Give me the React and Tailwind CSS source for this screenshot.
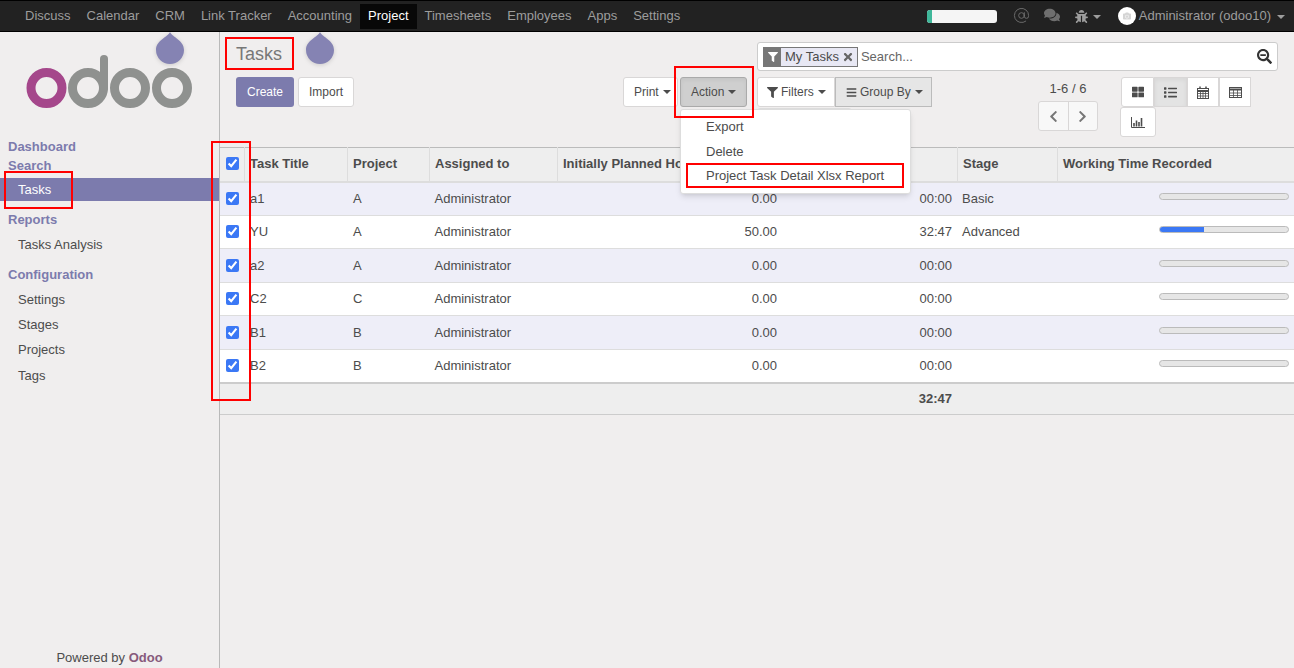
import { FaComments, FaBug, FaFilter, FaBars, FaThLarge, FaList, FaChevronLeft, FaChevronRight, FaSearchMinus, FaTimes, FaCamera } from 'react-icons/fa';
import { AtSign } from 'lucide-react';

const navItems = ['Discuss', 'Calendar', 'CRM', 'Link Tracker', 'Accounting', 'Project', 'Timesheets', 'Employees', 'Apps', 'Settings'];

const rows = [
  { title: 'a1', project: 'A', planned: '0.00', spent: '00:00', stage: 'Basic', progress: 0 },
  { title: 'YU', project: 'A', planned: '50.00', spent: '32:47', stage: 'Advanced', progress: 34 },
  { title: 'a2', project: 'A', planned: '0.00', spent: '00:00', stage: '', progress: 0 },
  { title: 'C2', project: 'C', planned: '0.00', spent: '00:00', stage: '', progress: 0 },
  { title: 'B1', project: 'B', planned: '0.00', spent: '00:00', stage: '', progress: 0 },
  { title: 'B2', project: 'B', planned: '0.00', spent: '00:00', stage: '', progress: 0 },
];

function Caret() {
  return <span className="ml-[4px] inline-block h-0 w-0 border-x-[4px] border-t-[4px] border-x-transparent border-t-current align-middle" />;
}

function Drop({ className }) {
  return (
    <svg className={`drop-shadow-sm ${className}`} width="30" height="36" viewBox="0 0 30 36">
      <path d="M15 1 C17 6 29 9 29 19 A14 14 0 0 1 1 19 C1 9 13 6 15 1 Z" fill="#8583b3" />
    </svg>
  );
}

function Logo() {
  return (
    <svg width="219" height="106" viewBox="0 32 219 106">
      <circle cx="46.5" cy="88" r="15.5" fill="none" stroke="#a5478b" strokeWidth="9" />
      <g fill="none" stroke="#8f918f" strokeWidth="9">
        <circle cx="88" cy="88" r="15.5" />
        <path d="M104 88 V59" strokeLinecap="round" strokeWidth="8" />
        <circle cx="130" cy="88" r="15.5" />
        <circle cx="172" cy="88" r="15.5" />
      </g>
    </svg>
  );
}

function CalendarIcon() {
  return (
    <svg width="12" height="13" viewBox="0 0 12 13" fill="none" stroke="#4c4c4c" strokeWidth="1">
      <rect x="0.5" y="2.5" width="11" height="10" />
      <path d="M0.5 5H11.5" strokeWidth="2" />
      <path d="M0.5 7.5H11.5M0.5 10H11.5M3.5 5V12.5M6 5V12.5M8.5 5V12.5" strokeWidth="0.8" />
      <path d="M3 0.5V3M9 0.5V3" strokeWidth="1.5" />
    </svg>
  );
}

function TableIcon() {
  return (
    <svg width="13" height="11" viewBox="0 0 13 11" fill="none" stroke="#4c4c4c" strokeWidth="1">
      <rect x="0.5" y="0.5" width="12" height="10" />
      <path d="M0.5 2.5H12.5" strokeWidth="2" />
      <path d="M0.5 6H12.5M0.5 8.5H12.5M4.5 2V10.5M8.5 2V10.5" strokeWidth="0.8" />
    </svg>
  );
}

function ChartIcon() {
  return (
    <svg width="14" height="11" viewBox="0 0 14 11" fill="none" stroke="#4c4c4c">
      <path d="M0.5 0V10.5H14" strokeWidth="1" />
      <path d="M3 9.5V6M5.5 9.5V3.5M8 9.5V5M10.5 9.5V1" strokeWidth="1.6" />
    </svg>
  );
}

function SideHeader({ children, className = '' }) {
  return <div className={`flex h-4 items-center pl-2 pt-[2px] font-bold text-[#7c7bad] ${className}`}>{children}</div>;
}

function SideLink({ children, className = '' }) {
  return <div className={`flex h-[25px] items-center pl-[18px] text-[#4c4c4c] ${className}`}>{children}</div>;
}

function Sidebar() {
  return (
    <aside className="flex w-[220px] shrink-0 flex-col border-r border-[#b9b9b9]">
      <Logo />
      <SideHeader>Dashboard</SideHeader>
      <SideHeader className="mt-[3px]">Search</SideHeader>
      <div className="mt-[5px] flex h-[23px] items-center bg-[#7c7bad] pl-[18px] text-white">Tasks</div>
      <SideHeader className="mt-[10px]">Reports</SideHeader>
      <SideLink className="mt-[5px]">Tasks Analysis</SideLink>
      <SideHeader className="mt-[9px]">Configuration</SideHeader>
      <SideLink className="mt-[5px]">Settings</SideLink>
      <SideLink>Stages</SideLink>
      <SideLink>Projects</SideLink>
      <SideLink className="mt-px">Tags</SideLink>
      <div className="mt-auto pb-px text-center text-[#4c4c4c]">
        Powered by <span className="font-bold text-[#875a7b]">Odoo</span>
      </div>
    </aside>
  );
}

function Navbar() {
  return (
    <nav className="flex h-[32px] shrink-0 items-center border-y border-black bg-[#222222] pl-[17px] pr-[9px] text-[#9d9d9d]">
      {navItems.map((item) => (
        <span key={item} className={`flex h-[25px] items-center px-2 ${item === 'Project' ? 'bg-[#080808] text-white' : ''}`}>
          {item}
        </span>
      ))}
      <div className="ml-auto flex h-[13px] w-[70px] overflow-hidden rounded-[3px] bg-[#f5f5f5]">
        <div className="w-[5px] bg-[#3fb79a]" />
      </div>
      <AtSign size={17} strokeWidth={1.3} className="ml-[16px] -translate-y-px text-[#6f6f6f]" />
      <FaComments className="ml-[14px] -translate-y-px text-[16px] text-[#6f6f6f]" />
      <FaBug className="ml-[15px] text-[13px] text-[#9d9d9d]" />
      <span className="ml-px"><Caret /></span>
      <span className="ml-[17px] flex h-[18px] w-[18px] items-center justify-center rounded-full bg-white">
        <FaCamera className="text-[8px] text-[#d5d5d5]" />
      </span>
      <span className="ml-[3px]">Administrator (odoo10)</span>
      <span className="ml-[2px]"><Caret /></span>
    </nav>
  );
}

function ViewButton({ children, className = '' }) {
  return <div className={`flex h-[30px] items-center justify-center border border-[#d9d7d7] bg-white text-[#4c4c4c] ${className}`}>{children}</div>;
}

function ControlPanel() {
  return (
    <div className="h-[115px] shrink-0 pl-4 text-[12px] text-[#4c4c4c]">
      <div className="flex h-[45px] items-start pt-[10px]">
        <div className="text-[18px] leading-[25px] text-[#777777]">Tasks</div>
        <div className="ml-auto mr-4 flex h-[29px] w-[521px] items-center rounded-[3px] border border-[#ccc] bg-white pl-[5px] pr-[5px] text-[13px]">
          <span className="flex h-5 items-center border border-[#777] bg-[#e8e8f4] pr-[3px]">
            <span className="mr-1 flex h-full w-[17px] items-center justify-center bg-[#777777] text-white">
              <FaFilter className="text-[10px]" />
            </span>
            My Tasks
            <FaTimes className="ml-[3px] text-[12px] text-[#666]" />
          </span>
          <span className="ml-[3px] text-[#666]">Search...</span>
          <FaSearchMinus className="ml-auto text-[15px] text-[#333]" />
        </div>
      </div>
      <div className="flex">
        <div className="flex h-[30px] w-[58px] items-center justify-center rounded-[3px] bg-[#7c7bad] text-white">Create</div>
        <div className="ml-1 flex h-[30px] w-[56px] items-center justify-center rounded-[3px] border border-[#d9d7d7] bg-white">Import</div>
        <div className="ml-[269px] flex h-[30px] w-[55px] items-center rounded-[3px] border border-[#d9d7d7] bg-white pl-[10px]">Print<Caret /></div>
        <div className="ml-[2px] flex h-[30px] w-[67px] items-center rounded-[3px] border border-[#aaa] bg-[#cfcfcf] pl-[10px] shadow-inner">Action<Caret /></div>
        <div className="ml-[10px] flex h-[30px] w-[78px] items-center rounded-l-[3px] border border-[#d9d7d7] bg-white pl-[9px]">
          <FaFilter className="mr-[3px] text-[11px]" />Filters<Caret />
        </div>
        <div className="flex h-[30px] w-[97px] items-center border border-[#bbb] bg-[#e6e6e6] pl-[10px]">
          <FaBars className="mr-[3px] text-[11px]" />Group By<Caret />
        </div>
        <div className="ml-[106px] flex w-[60px] flex-col items-center">
          <div className="flex h-[24px] items-center text-[13px]">1-6 / 6</div>
          <div className="flex h-[30px] w-[60px] rounded-[3px] border border-[#d9d7d7] bg-[#f8f8f8] text-[#777]">
            <div className="flex flex-1 items-center justify-center border-r border-[#d9d7d7]"><FaChevronLeft className="text-[13px]" /></div>
            <div className="flex flex-1 items-center justify-center"><FaChevronRight className="text-[13px]" /></div>
          </div>
        </div>
        <div className="ml-[23px] flex w-[131px] flex-wrap content-start">
          <ViewButton className="w-[33px] rounded-l-[3px]"><FaThLarge className="text-[12px]" /></ViewButton>
          <ViewButton className="w-[33px] !bg-[#e3e3e3] shadow-inner"><FaList className="text-[13px]" /></ViewButton>
          <ViewButton className="w-[32px]"><CalendarIcon /></ViewButton>
          <ViewButton className="w-[32px]"><TableIcon /></ViewButton>
          <ViewButton className="-ml-px w-[36px] rounded-[3px]"><ChartIcon /></ViewButton>
        </div>
      </div>
    </div>
  );
}

function Check() {
  return <input type="checkbox" defaultChecked className="block h-[13px] w-[13px] accent-[#3b78f5]" />;
}

function TaskTable() {
  const th = 'border-r border-[#dddddd] pb-[2px] pl-[5.5px] pr-[5px] text-left font-bold';
  return (
    <table className="w-full table-fixed border-collapse text-[13px] text-[#4c4c4c]">
      <colgroup>
        <col className="w-[24px]" />
        <col className="w-[103px]" />
        <col className="w-[82px]" />
        <col className="w-[128px]" />
        <col className="w-[224px]" />
        <col className="w-[176px]" />
        <col className="w-[100px]" />
        <col />
      </colgroup>
      <thead>
        <tr className="h-[34px] border-t border-b-2 border-t-[#bbbbbb] border-b-[#dddddd] bg-[#eeeeee]">
          <th className="border-r border-[#dddddd] pb-[2px] pl-[6px]"><Check /></th>
          <th className={th}>Task Title</th>
          <th className={th}>Project</th>
          <th className={th}>Assigned to</th>
          <th className={`${th} whitespace-nowrap`}>Initially Planned Hours</th>
          <th className={th} />
          <th className={th}>Stage</th>
          <th className="pb-[2px] pl-[5.5px] pr-[5px] text-left font-bold">Working Time Recorded</th>
        </tr>
      </thead>
      <tbody>
        {rows.map((row, i) => (
          <tr key={row.title} className={`h-[33.5px] border-b border-[#dddddd] ${i % 2 === 0 ? 'bg-[#eeeef8]' : 'bg-white'}`}>
            <td className="pl-[6px]"><Check /></td>
            <td className="pl-[6px] pr-[5px]">{row.title}</td>
            <td className="pl-[6px] pr-[5px]">{row.project}</td>
            <td className="pl-[5.5px] pr-[5px]">Administrator</td>
            <td className="pl-[5px] pr-[4px] text-right">{row.planned}</td>
            <td className="px-[5px] text-right">{row.spent}</td>
            <td className="pl-[5px] pr-[4px]">{row.stage}</td>
            <td className="px-[5px]">
              <div className="mb-[4px] ml-auto h-[7px] w-[130px] overflow-hidden rounded-full border border-[#bbbbbb] bg-[#e6e6e6]">
                <div className="h-full bg-[#3b78f5]" style={{ width: `${row.progress}%` }} />
              </div>
            </td>
          </tr>
        ))}
      </tbody>
      <tfoot>
        <tr className="h-[32px] border-t-2 border-b border-t-[#cccccc] border-b-[#cccccc] bg-[#eeeeee] font-bold">
          <td colSpan={5} />
          <td className="px-[5px] text-right">32:47</td>
          <td colSpan={2} />
        </tr>
      </tfoot>
    </table>
  );
}

function ActionMenu() {
  return (
    <>
      <div className="absolute left-[757px] top-[108px] h-[8px] w-[95px] rounded-t-[3px] border border-[#ddd] bg-white" />
      <div className="absolute left-[680px] top-[109px] w-[231px] rounded-[3px] border border-[#ddd] bg-white pb-[5px] pt-[4px] text-[13px] text-[#4c4c4c] shadow-md">
        <div className="flex h-[25px] items-center pl-[25px]">Export</div>
        <div className="flex h-[25px] items-center pl-[25px]">Delete</div>
        <div className="flex h-[24px] items-center pl-[25px]">Project Task Detail Xlsx Report</div>
      </div>
    </>
  );
}

export default function App() {
  return (
    <div className="relative flex h-screen flex-col overflow-hidden bg-[#f0eeee] font-['Liberation_Sans',Arial,sans-serif] text-[13px]">
      <Navbar />
      <div className="flex min-h-0 flex-1">
        <Sidebar />
        <main className="min-w-0 flex-1">
          <ControlPanel />
          <TaskTable />
        </main>
      </div>

      <Drop className="absolute left-[155px] top-[31px]" />
      <Drop className="absolute left-[305px] top-[31px]" />
      <ActionMenu />

      {/* red annotation boxes from the original screenshot */}
      <div className="absolute left-[225px] top-[37px] h-[33px] w-[69px] border-2 border-[#ff0000]" />
      <div className="absolute left-[4px] top-[171px] h-[38px] w-[69px] border-2 border-[#ff0000]" />
      <div className="absolute left-[211px] top-[141px] h-[260px] w-[40px] border-2 border-[#ff0000]" />
      <div className="absolute left-[674px] top-[66px] h-[52px] w-[80px] border-2 border-[#ff0000]" />
      <div className="absolute left-[686px] top-[163px] h-[25px] w-[218px] border-2 border-[#ff0000]" />
    </div>
  );
}
